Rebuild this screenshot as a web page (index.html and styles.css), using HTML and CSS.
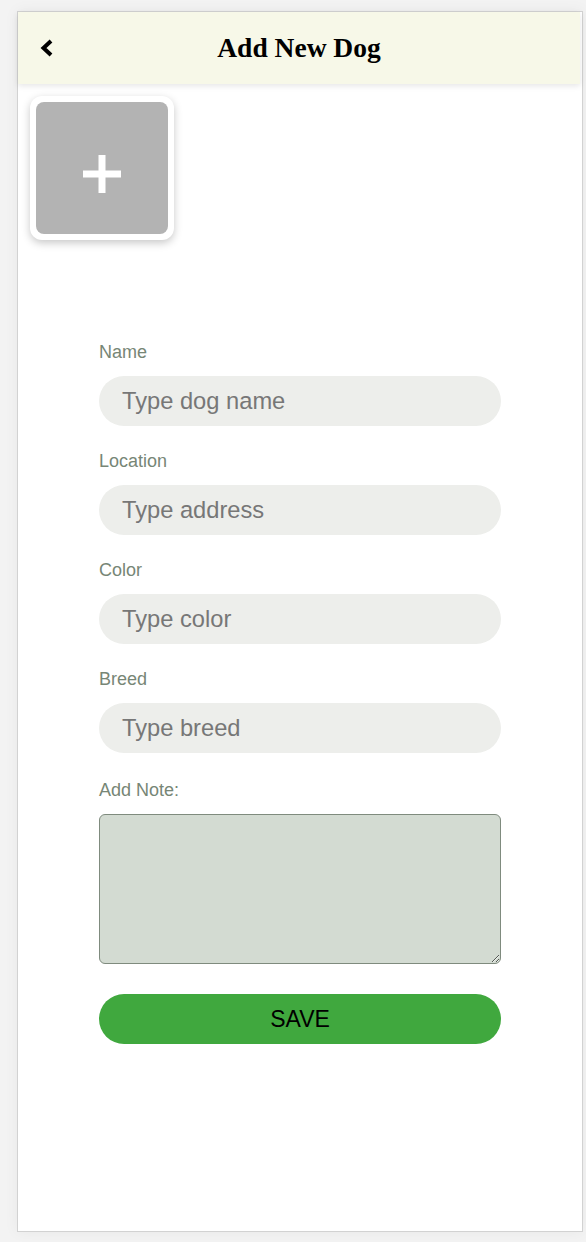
FILE: index.html
```html
<!DOCTYPE html>
<html lang="en">
<head>
<meta charset="utf-8">
<title>Add New Dog</title>
<link rel="stylesheet" href="styles.css">
</head>
<body>
<div class="phone">
  <header class="topbar">
    <button class="back" aria-label="Back">
      <svg width="16" height="20" viewBox="0 0 16 20"><polyline points="12,3 4.5,10 12,17" fill="none" stroke="#000" stroke-width="4" stroke-linejoin="miter" stroke-linecap="butt"/></svg>
    </button>
    <h1 class="title">Add New Dog</h1>
  </header>
  <div class="photo">
    <div class="photo-inner">
      <svg class="plus" width="38" height="38" viewBox="0 0 38 38"><rect x="15.5" y="0" width="7" height="38" fill="#fff"/><rect x="0" y="15.5" width="38" height="7" fill="#fff"/></svg>
    </div>
  </div>
  <form class="form">
    <div class="field">
      <label class="label">Name</label>
      <input class="input" type="text" placeholder="Type dog name">
    </div>
    <div class="field">
      <label class="label">Location</label>
      <input class="input" type="text" placeholder="Type address">
    </div>
    <div class="field">
      <label class="label">Color</label>
      <input class="input" type="text" placeholder="Type color">
    </div>
    <div class="field">
      <label class="label">Breed</label>
      <input class="input" type="text" placeholder="Type breed">
    </div>
    <div class="field note">
      <label class="label">Add Note:</label>
      <textarea class="textarea"></textarea>
    </div>
    <button class="save" type="button">SAVE</button>
  </form>
</div>
</body>
</html>
```

FILE: styles.css
```css
* { box-sizing: border-box; }
html, body { margin: 0; padding: 0; }
body {
  background: #f3f3f3;
  font-family: "Liberation Sans", Arial, sans-serif;
  height: 1242px;
  overflow: hidden;
}
.phone {
  margin: 11px 0 0 17px;
  width: 566px;
  height: 1221px;
  background: #fff;
  border: 1px solid #d2d2d2;
  box-shadow: 0 0 14px rgba(0,0,0,0.05);
  display: flex;
  flex-direction: column;
}
.topbar {
  height: 72px;
  margin-right: 2px;
  background: #f7f8e8;
  box-shadow: 0 2px 6px rgba(0,0,0,0.10);
  display: flex;
  align-items: center;
}
.back {
  background: none;
  border: 0;
  padding: 0;
  margin-left: 21px;
  width: 16px;
  height: 20px;
  display: flex;
  align-items: center;
  justify-content: center;
  cursor: pointer;
}
.title {
  flex: 1;
  margin: 0 37px 0 0;
  text-align: center;
  font-family: "Liberation Serif", "Times New Roman", serif;
  font-weight: bold;
  font-size: 27.5px;
  color: #000;
}
.photo {
  margin: 12px 0 0 12px;
  width: 144px;
  height: 144px;
  padding: 6px;
  background: #fff;
  border-radius: 12px;
  box-shadow: 0 3px 8px rgba(0,0,0,0.22);
}
.photo-inner {
  width: 132px;
  height: 132px;
  background: #b3b3b3;
  border-radius: 8px;
  display: flex;
  align-items: center;
  justify-content: center;
}
.plus { margin-top: 12px; }
.form {
  width: 402px;
  margin: 102px auto 0;
  display: flex;
  flex-direction: column;
}
.field {
  display: flex;
  flex-direction: column;
  margin-bottom: 25px;
}
.field.note { margin-bottom: 30px; }
.label {
  font-size: 18px;
  line-height: 20px;
  color: #778676;
  margin-bottom: 14px;
}
.note .label { margin-top: 2px; margin-bottom: 14px; }
.input {
  height: 50px;
  border: 0;
  border-radius: 25px;
  background: #edeeeb;
  padding: 0 23px;
  font-family: "Liberation Sans", Arial, sans-serif;
  font-size: 23.7px;
  color: #333;
  outline: none;
}
.input::placeholder { color: #777; opacity: 1; }
.textarea {
  height: 150px;
  border: 1px solid #7f8b7e;
  border-radius: 6px;
  background: #d3dbd2;
  font-family: "Liberation Sans", Arial, sans-serif;
  font-size: 16px;
  padding: 6px;
  outline: none;
}
.save {
  height: 50px;
  border: 0;
  border-radius: 25px;
  background: #40a83e;
  color: #000;
  font-family: "Liberation Sans", Arial, sans-serif;
  font-size: 23px;
  cursor: pointer;
}
```
